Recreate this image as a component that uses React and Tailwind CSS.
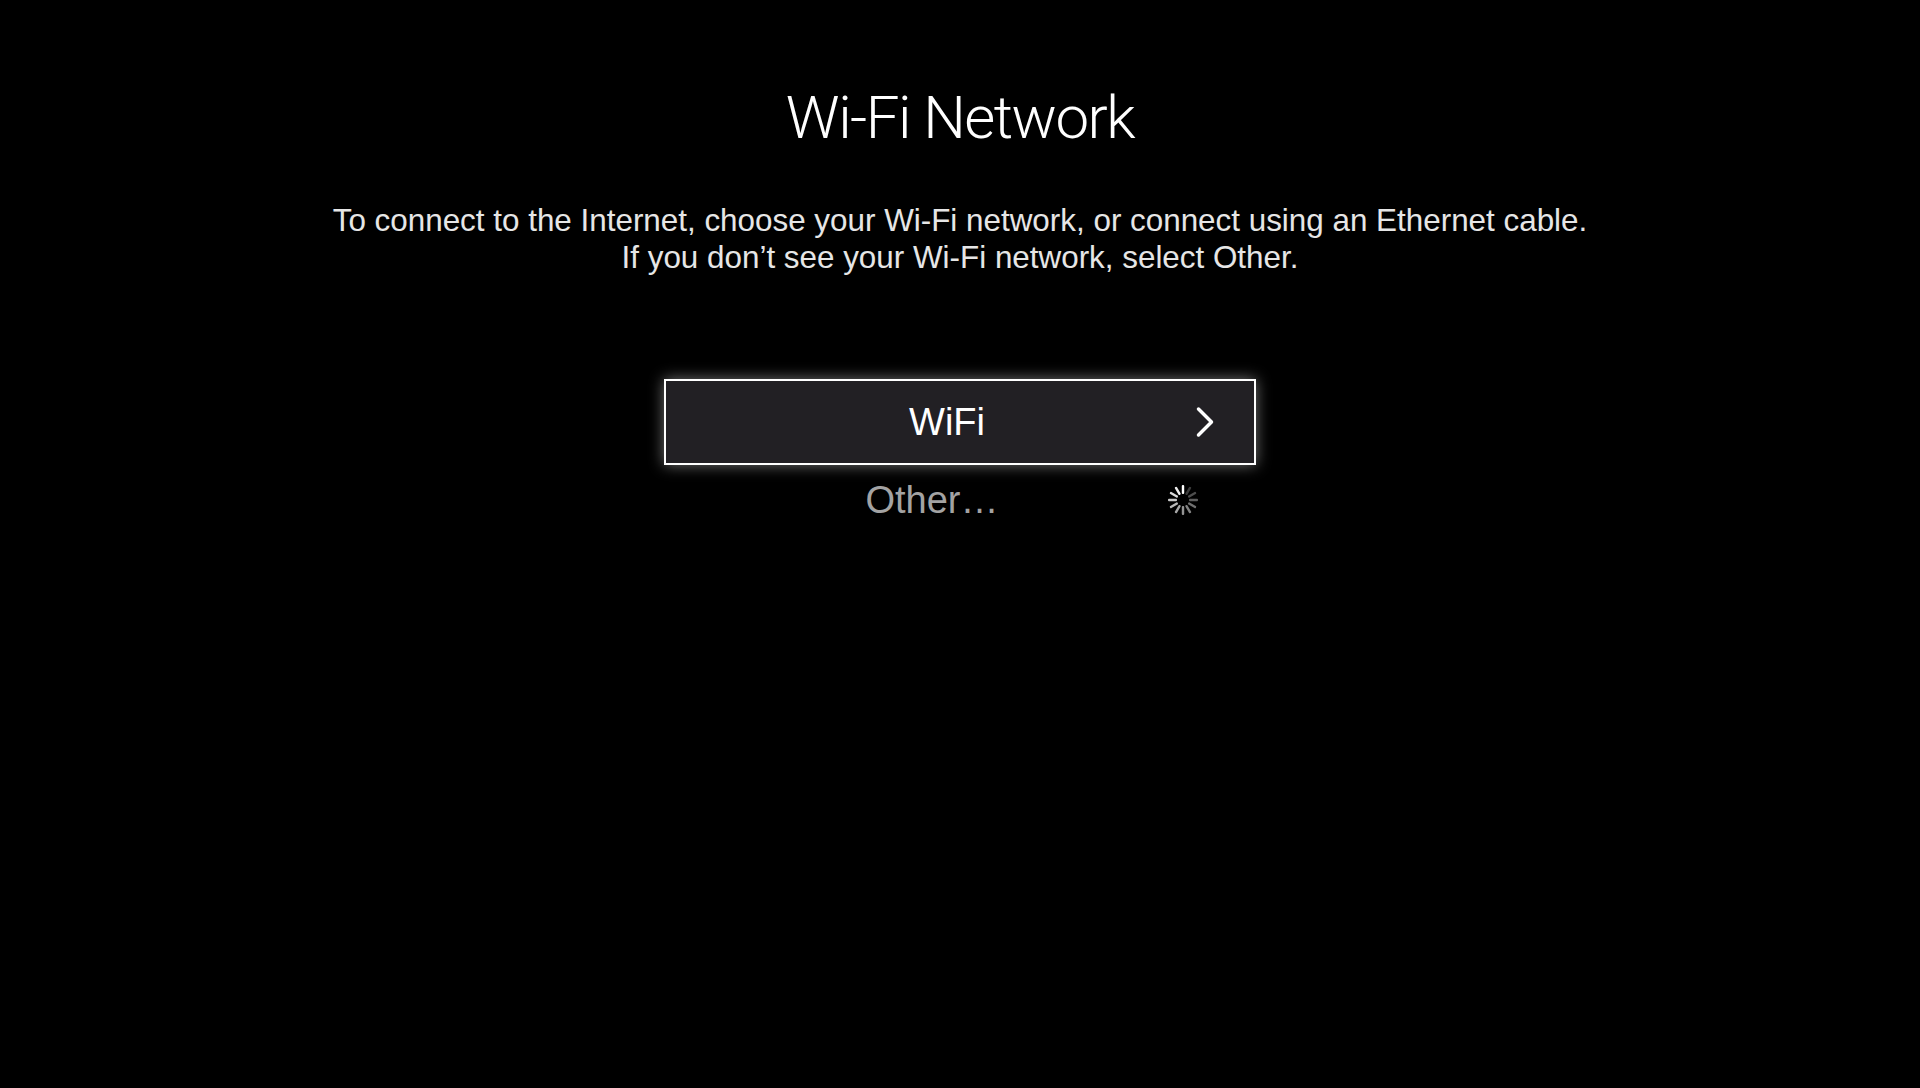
import { ChevronRight } from "lucide-react";

function Spinner() {
  const spokes = Array.from({ length: 12 }, (_, i) => i);
  return (
    <svg width="34" height="34" viewBox="0 0 34 34">
      {spokes.map((i) => (
        <rect
          key={i}
          x="15.8"
          y="2"
          width="2.4"
          height="9"
          rx="1"
          fill="#ffffff"
          opacity={i === 0 ? 1 : Math.max(0.18, 1 - i * 0.07)}
          transform={`rotate(${-i * 30} 17 17)`}
        />
      ))}
    </svg>
  );
}

export default function App() {
  return (
    <div className="min-h-screen w-full bg-black text-white font-['Liberation_Sans',Arial,sans-serif]">
      <div className="flex flex-col items-center pt-[88px]">
        <h1 className="font-['Roboto',sans-serif] text-[60px] font-light leading-none tracking-tight">
          Wi-Fi Network
        </h1>

        <p className="mt-[54px] text-center text-[31.4px] leading-[37px] text-[#e6e6e6]">
          To connect to the Internet, choose your Wi-Fi network, or connect using an Ethernet cable.
          <br />
          If you don’t see your Wi-Fi network, select Other.
        </p>

        <div className="mt-[103px] w-[592px]">
          <div className="relative flex h-[86px] items-center justify-center border-2 border-white bg-[#222024] shadow-[0_0_14px_rgba(255,255,255,0.45)]">
            <span className="-ml-[26px] text-[38px]">WiFi</span>
            <ChevronRight
              className="absolute right-[23px] top-1/2 -translate-y-1/2"
              size={52}
              strokeWidth={1.6}
            />
          </div>
          <div className="relative flex h-[70px] items-center justify-center">
            <span className="-ml-[56px] text-[38px] text-[#a3a3a3]">Other…</span>
            <div className="absolute right-[56px] top-1/2 -translate-y-1/2">
              <Spinner />
            </div>
          </div>
        </div>
      </div>
    </div>
  );
}
